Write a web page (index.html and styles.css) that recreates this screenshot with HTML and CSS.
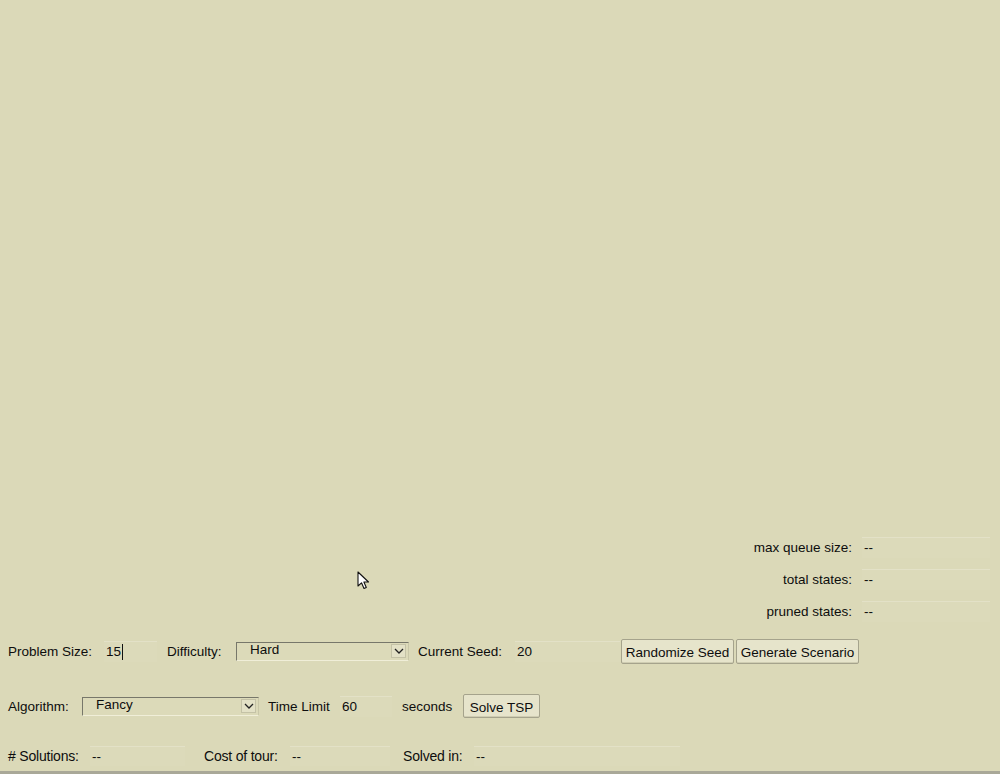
FILE: index.html
```html
<!DOCTYPE html>
<html>
<head>
<meta charset="utf-8">
<link rel="stylesheet" href="styles.css">
</head>
<body>
<div class="app">
  <div class="canvas"></div>
  <div class="stats">
    <div class="stat"><span class="stat-label">max queue size:</span><span class="field stat-field">--</span></div>
    <div class="stat"><span class="stat-label">total states:</span><span class="field stat-field">--</span></div>
    <div class="stat"><span class="stat-label">pruned states:</span><span class="field stat-field">--</span></div>
  </div>
  <div class="row row-1">
    <span class="lbl w-size">Problem Size:</span>
    <span class="field input w-53">15<span class="caret"></span></span>
    <span class="lbl w-diff">Difficulty:</span>
    <span class="select w-173"><span class="opt">Hard</span><span class="chev"><svg width="12" height="8" viewBox="0 0 12 8"><path d="M2 2 L6 6 L10 2" fill="none" stroke="#222" stroke-width="1.3"/></svg></span></span>
    <span class="lbl w-seed">Current Seed:</span>
    <span class="field input w-105">20</span>
    <button class="btn w-113">Randomize Seed</button>
    <button class="btn w-123">Generate Scenario</button>
  </div>
  <div class="row row-2">
    <span class="lbl w-alg">Algorithm:</span>
    <span class="select w-177"><span class="opt">Fancy</span><span class="chev"><svg width="12" height="8" viewBox="0 0 12 8"><path d="M2 2 L6 6 L10 2" fill="none" stroke="#222" stroke-width="1.3"/></svg></span></span>
    <span class="lbl w-time">Time Limit</span>
    <span class="field input w-52">60</span>
    <span class="lbl w-sec">seconds</span>
    <button class="btn w-77">Solve TSP</button>
  </div>
  <div class="row row-3">
    <span class="lbl w-sol">#&nbsp;Solutions:</span>
    <span class="field res w-95">--</span>
    <span class="lbl w-cost">Cost of tour:</span>
    <span class="field res w-100">--</span>
    <span class="lbl w-solved">Solved in:</span>
    <span class="field res w-206">--</span>
  </div>
  <svg class="pointer" width="14" height="20" viewBox="0 0 14 20"><path d="M1 1 L1 15 L4.5 11.8 L7 17.5 L9.3 16.5 L6.9 11 L11.5 11 Z" fill="#fff" stroke="#111" stroke-width="1.1" stroke-linejoin="round"/></svg>
</div>
</body>
</html>
```
FILE: styles.css
```css
* { box-sizing: border-box; }
html, body { margin: 0; padding: 0; }
body {
  background: #dbd9b8;
  font-family: "Liberation Sans", Arial, sans-serif;
  font-size: 13.5px;
  color: #0d0d0d;
}
.app {
  position: relative;
  width: 1000px;
  height: 774px;
  display: flex;
  flex-direction: column;
  border-bottom: 3px solid #a9a898;
  overflow: hidden;
}
.canvas { height: 531px; flex: none; }
.stats { display: flex; flex-direction: column; }
.stat {
  height: 32px;
  display: flex;
  align-items: center;
  justify-content: flex-end;
  padding-right: 10px;
}
.stat-label { text-align: right; margin-right: 10px; }
.field {
  display: flex;
  align-items: center;
  height: 21px;
  background: rgba(255,255,255,0.04);
  border-top: 1px solid rgba(255,255,255,0.2);
  padding-left: 2px;
}
.stat-field { width: 128px; }
.row {
  display: flex;
  align-items: center;
  padding-left: 8px;
  height: 30px;
  flex: none;
}
.row-1 { margin-top: 9px; }
.row-2 { margin-top: 25px; }
.row-3 { margin-top: 20px; }
.lbl { flex: none; white-space: nowrap; }
.w-size { width: 96px; }
.w-diff { width: 69px; margin-left: 10px; }
.w-seed { width: 97px; margin-left: 9px; }
.w-alg { width: 74px; }
.w-time { width: 72px; margin-left: 9px; }
.w-sec { width: 61px; margin-left: 10px; }
.w-sol { width: 82px; font-size: 14px; letter-spacing: -0.2px; }
.w-cost { width: 86px; margin-left: 19px; font-size: 14px; letter-spacing: -0.2px; }
.w-solved { width: 71px; margin-left: 13px; font-size: 14px; letter-spacing: -0.2px; }
.input { flex: none; }
.w-53 { width: 53px; }
.w-52 { width: 52px; }
.w-105 { width: 105px; }
.w-95 { width: 95px; }
.w-100 { width: 100px; }
.w-206 { width: 206px; }
.res { height: 20px; }
.caret {
  display: inline-block;
  width: 1px;
  height: 16px;
  background: #111;
  margin-left: 1px;
}
.select {
  flex: none;
  display: flex;
  align-items: center;
  justify-content: space-between;
  height: 19px;
  border-top: 1px solid #77776a;
  border-left: 1px solid #77776a;
  border-right: 1px solid #c9c7a8;
  border-bottom: 1px solid #f0eed8;
  background: #dcdab9;
}
.w-173 { width: 173px; }
.w-177 { width: 177px; }
.opt { padding-left: 13px; line-height: 14px; margin-top: -3px; }
.chev {
  width: 15px;
  height: 14px;
  margin-right: 2px;
  border: 1px solid #c4c2a6;
  display: flex;
  align-items: center;
  justify-content: center;
  background: #e3e1c6;
}
.btn {
  flex: none;
  font-family: "Liberation Sans", Arial, sans-serif;
  font-size: 13.5px;
  color: #0d0d0d;
  height: 25px;
  padding: 2px 0 0 0;
  white-space: nowrap;
  background: #e6e4cb;
  border: 1px solid #a5a38c;
  border-radius: 2px;
  text-align: center;
  box-shadow: inset 0 -1px 0 #cfcdb2;
}
.w-113 { width: 113px; margin-left: 1px; }
.w-123 { width: 123px; margin-left: 2px; }
.w-77 { width: 77px; height: 24px; }
.pointer { position: absolute; left: 357px; top: 571px; }
```
